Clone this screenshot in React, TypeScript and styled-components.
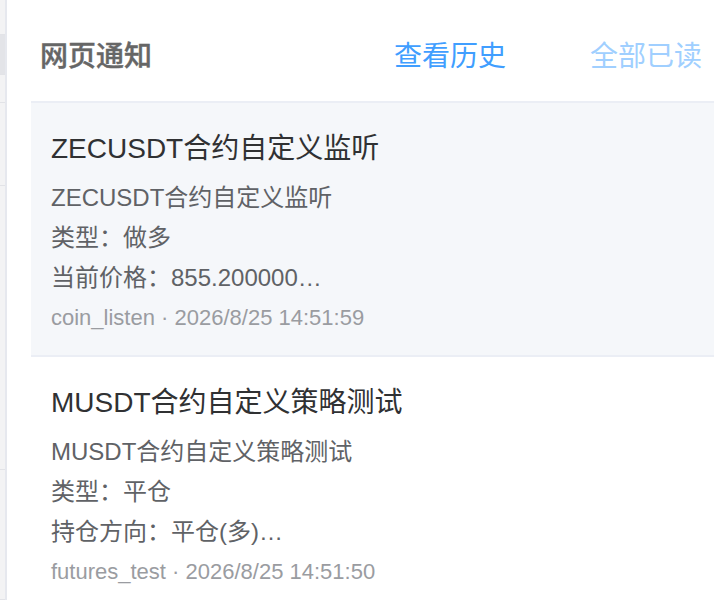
import React from 'react';
import styled, { createGlobalStyle } from 'styled-components';

interface Notice {
    title: string;
    lines: string[];
    source: string;
    time: string;
    unread?: boolean;
}

const notices: Notice[] = [
    {
        title: 'ZECUSDT合约自定义监听',
        lines: ['ZECUSDT合约自定义监听', '类型：做多', '当前价格：855.200000…'],
        source: 'coin_listen',
        time: '2026/8/25 14:51:59',
        unread: true,
    },
    {
        title: 'MUSDT合约自定义策略测试',
        lines: ['MUSDT合约自定义策略测试', '类型：平仓', '持仓方向：平仓(多)…'],
        source: 'futures_test',
        time: '2026/8/25 14:51:50',
    },
];

const backdropRows = [
    { h: 35, dark: false },
    { h: 40, dark: true },
    { h: 28, dark: false },
    { h: 83, dark: false },
    { h: 284, dark: false },
    { h: 130, dark: false },
];

const App: React.FC = () => {
    return (
        <>
            <GlobalStyle />
            <Page>
                <Backdrop>
                    {backdropRows.map((r, i) => (
                        <BackdropRow key={i} h={r.h} dark={r.dark} />
                    ))}
                </Backdrop>
                <Panel>
                    <Header>
                        <Title>网页通知</Title>
                        <TextButton>查看历史</TextButton>
                        <TextButton disabled>全部已读</TextButton>
                    </Header>
                    <List>
                        {notices.map((n) => (
                            <Item key={n.title} unread={n.unread}>
                                <ItemTitle>{n.title}</ItemTitle>
                                <Body>
                                    {n.lines.map((l) => (
                                        <Line key={l}>{l}</Line>
                                    ))}
                                </Body>
                                <Meta>
                                    {n.source} · {n.time}
                                </Meta>
                            </Item>
                        ))}
                    </List>
                </Panel>
            </Page>
        </>
    );
};

const GlobalStyle = createGlobalStyle`
    html, body {
        margin: 0;
        padding: 0;
        background: #ffffff;
        overflow: hidden;
    }
    body {
        font-family: "Liberation Sans", "Noto Sans CJK SC", sans-serif;
    }
`;

const Page = styled.div`
    display: flex;
    width: 714px;
    height: 600px;
    overflow: hidden;
`;

const Backdrop = styled.div`
    width: 5px;
    flex-shrink: 0;
    background: #f2f2f3;
    display: flex;
    flex-direction: column;
`;

const BackdropRow = styled.div<{ h: number; dark?: boolean }>`
    height: ${(p) => p.h}px;
    flex-shrink: 0;
    box-sizing: border-box;
    border-bottom: 1px solid #e2e3e7;
    background: ${(p) => (p.dark ? '#e3e4e8' : '#f3f3f4')};
`;

const Panel = styled.div`
    flex: 1;
    background: #ffffff;
    border-left: 2px solid #e6e8ee;
    display: flex;
    flex-direction: column;
    overflow: hidden;
`;

const Header = styled.div`
    height: 101px;
    flex-shrink: 0;
    box-sizing: border-box;
    padding: 6px 12px 0 33px;
    display: flex;
    align-items: center;
`;

const Title = styled.div`
    flex: 1;
    font-size: 28px;
    font-weight: 500;
    color: #666666;
    -webkit-text-stroke: 0.4px #666666;
`;

const TextButton = styled.span<{ disabled?: boolean }>`
    font-size: 28px;
    color: ${(p) => (p.disabled ? '#a0cfff' : '#409eff')};
    margin-left: 84px;
    cursor: ${(p) => (p.disabled ? 'not-allowed' : 'pointer')};
`;

const List = styled.div`
    flex-shrink: 0;
    margin-left: 24px;
    border-top: 2px solid #ebeef5;
`;

const Item = styled.div<{ unread?: boolean }>`
    padding: 26px 20px 17px;
    background: ${(p) => (p.unread ? '#f5f7fa' : '#ffffff')};
    border-bottom: 2px solid #ebeef5;
`;

const ItemTitle = styled.div`
    font-size: 28px;
    line-height: 40px;
    color: #303133;
`;

const Body = styled.div`
    margin-top: 9px;
`;

const Line = styled.div`
    font-size: 24px;
    line-height: 40px;
    color: #606266;
    white-space: pre;
`;

const Meta = styled.div`
    font-size: 22px;
    line-height: 40px;
    color: #9a9ca1;
`;

export default App;
